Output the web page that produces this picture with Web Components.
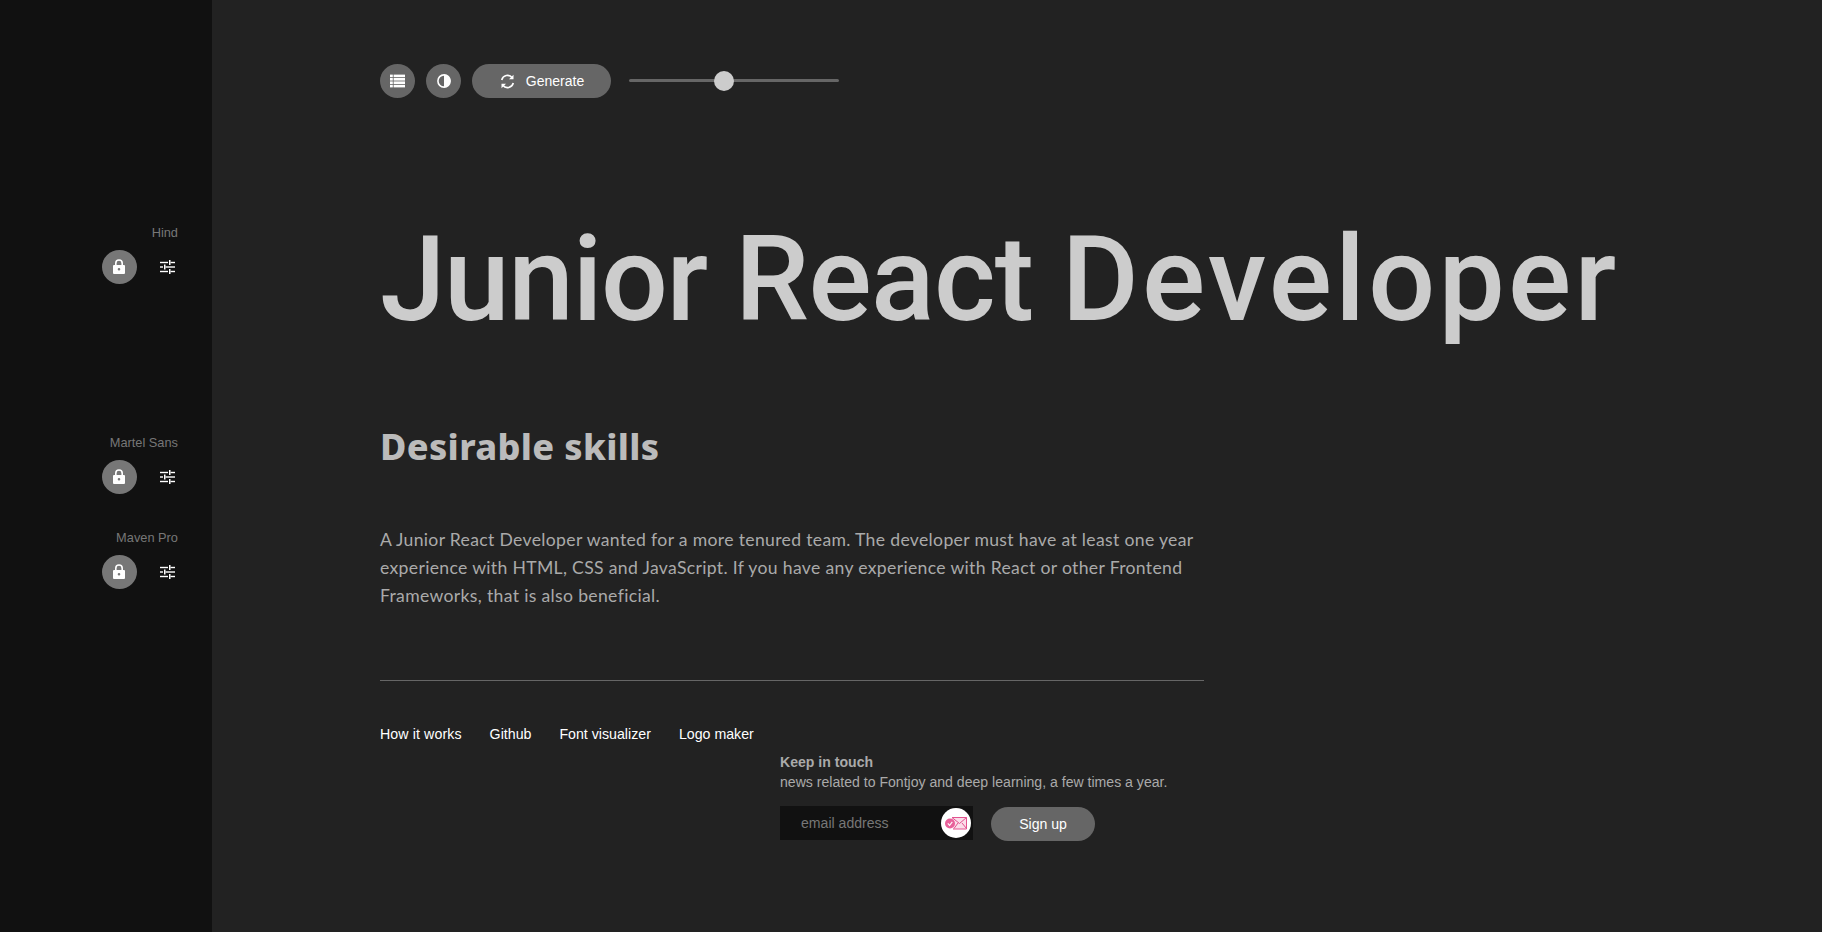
<!DOCTYPE html>
<html lang="en"><head><meta charset="utf-8"><title>Fontjoy</title>
<style>
html,body{margin:0;height:100%;background:#222;overflow:hidden}
body{display:flex;height:932px;font-family:"Liberation Sans",Arial,sans-serif}
</style></head><body>
<fj-sidebar>
  <fj-font-row style="margin-top:225px" name="Hind"></fj-font-row>
  <fj-font-row style="margin-top:151px" name="Martel Sans"></fj-font-row>
  <fj-font-row style="margin-top:36px" name="Maven Pro"></fj-font-row>
</fj-sidebar>
<fj-main>
  <fj-toolbar></fj-toolbar>
  <fj-preview></fj-preview>
  <fj-footer></fj-footer>
</fj-main>
<script>
const ICONS={
 list:'<svg width="15" height="14" viewBox="0 0 15 14" fill="#fff"><rect x="0" y="0.6" width="2.8" height="2.6"/><rect x="3.6" y="0.6" width="11.4" height="2.6"/><rect x="0" y="4" width="2.8" height="2.6"/><rect x="3.6" y="4" width="11.4" height="2.6"/><rect x="0" y="7.4" width="2.8" height="2.6"/><rect x="3.6" y="7.4" width="11.4" height="2.6"/><rect x="0" y="10.8" width="2.8" height="2.6"/><rect x="3.6" y="10.8" width="11.4" height="2.6"/></svg>',
 contrast:'<svg width="14" height="14" viewBox="0 0 14 14"><circle cx="7" cy="7" r="6.1" fill="none" stroke="#fff" stroke-width="1.6"/><path d="M7 0.5a6.5 6.5 0 0 1 0 13z" fill="#fff"/></svg>',
 sync:'<svg width="15" height="15" viewBox="0 0 14 14" fill="none" stroke="#fff" stroke-width="1.5"><path d="M1.6 5.6A5.6 5.6 0 0 1 11.4 3.4"/><path d="M12.4 8.4A5.6 5.6 0 0 1 2.6 10.6"/><path d="M12.6 0.6v4.2H8.4z" fill="#fff" stroke="none"/><path d="M1.4 13.4V9.2h4.2z" fill="#fff" stroke="none"/></svg>',
 lock:'<svg style="transform:translateX(-1px)" width="12" height="15" viewBox="0 0 12 15"><path d="M2.8 6.5V4.2a3.2 3.2 0 0 1 6.4 0v2.3" fill="none" stroke="#fff" stroke-width="1.6"/><path fill-rule="evenodd" d="M1 6h10a1 1 0 0 1 1 1v7a1 1 0 0 1-1 1H1a1 1 0 0 1-1-1V7a1 1 0 0 1 1-1zm5 3a1.3 1.3 0 1 0 0 2.6A1.3 1.3 0 0 0 6 9z" fill="#fff"/></svg>',
 tune:'<svg width="15" height="14" viewBox="0 0 15 14" fill="#fff"><rect x="0" y="1.8" width="8" height="1.4"/><rect x="9" y="0" width="1.5" height="5"/><rect x="10.5" y="1.8" width="4.5" height="1.4"/><rect x="0" y="6.3" width="3" height="1.4"/><rect x="4" y="4.5" width="1.5" height="5"/><rect x="5.5" y="6.3" width="9.5" height="1.4"/><rect x="0" y="10.8" width="8" height="1.4"/><rect x="9" y="9" width="1.5" height="5"/><rect x="10.5" y="10.8" width="4.5" height="1.4"/></svg>',
 mail:'<svg width="24" height="16" viewBox="0 0 24 16"><path d="M8 2.5h14.5v11.5H9" fill="#fbdde9" stroke="#e2528f" stroke-width="1"/><path d="M8 2.5l7.5 6 7-6M14 8l-4 5.5M18 8l4.5 5.5" fill="none" stroke="#e2528f" stroke-width="1"/><circle cx="6" cy="8.5" r="5" fill="#e8609a"/><path d="M3.8 8.3l1.8 2 2.7-3.4" fill="none" stroke="#fff" stroke-width="1.1"/></svg>'
};
function def(name,css,html){
  customElements.define(name,class extends HTMLElement{
    connectedCallback(){
      if(this.shadowRoot)return;
      const r=this.attachShadow({mode:'open'});
      r.innerHTML='<style>'+css+'</style>'+html(this);
    }
  });
}
def('fj-sidebar',':host{display:flex;flex-direction:column;flex:0 0 212px;width:212px;height:932px;background:#111;box-sizing:border-box;padding-right:34px}',()=>'<slot></slot>');
def('fj-round-button',':host{display:inline-flex;align-items:center;justify-content:center;width:35px;height:34px;border-radius:50%;background:var(--bg,#666);flex:none}',el=>ICONS[el.getAttribute('icon')]);
def('fj-font-row',`:host{display:block;text-align:right}
.n{font-size:12.8px;line-height:16px;color:#777;height:16px}
.r{display:flex;justify-content:flex-end;align-items:center;margin-top:8px;height:35px}
fj-round-button{--bg:#777}
.t{display:flex;margin-left:22px;width:16px;margin-right:3px;justify-content:center}`,
el=>`<div class="n">${el.getAttribute('name')}</div><div class="r"><fj-round-button icon="lock"></fj-round-button><span class="t">${ICONS.tune}</span></div>`);
def('fj-main',':host{display:block;flex:1;padding:64px 0 0 168px;min-width:0;color:#ccc}',()=>'<slot></slot>');
def('fj-toolbar',`:host{display:flex;align-items:center;gap:11px;height:34px}
.g{display:inline-flex;align-items:center;justify-content:center;width:139px;height:34px;border-radius:17px;background:#666;color:#fff;font-size:14px;gap:11px;padding-left:1px;box-sizing:border-box}
.s{position:relative;margin-left:7px;top:-1px;width:210px;height:3px;border-radius:2px;background:#666}
.k{position:absolute;left:85px;top:-8px;width:20px;height:20px;border-radius:50%;background:#ccc}`,
()=>`<fj-round-button icon="list"></fj-round-button><fj-round-button icon="contrast"></fj-round-button><div class="g">${ICONS.sync}<span>Generate</span></div><div class="s"><div class="k"></div></div>`);
def('fj-preview',`:host{display:block}
h1{margin:107px 0 0 0;font:500 118px/150px "Roboto",sans-serif;color:#ccc;white-space:nowrap;word-spacing:-1px}
h1 .a{letter-spacing:-1.5px}h1 .b{letter-spacing:-.7px}h1 .c{letter-spacing:3.2px}
h2{margin:67px 0 0;font:800 36px/50px "Noto Sans",sans-serif;color:#bbb;white-space:nowrap;letter-spacing:.35px}
p{margin:54px 0 0;width:824px;font:400 17.6px/28px "Lato",sans-serif;color:#aaa;letter-spacing:.33px}
hr{margin:70px 0 0;width:824px;border:0;height:1px;background:#666}`,
()=>`<h1><span class="a">Junior</span> <span class="b">React</span> <span class="c">Developer</span></h1><h2>Desirable skills</h2><p>A Junior React Developer wanted for a more tenured team. The developer must have at least one year experience with HTML, CSS and JavaScript. If you have any experience with React or other Frontend Frameworks, that is also beneficial.</p><hr>`);
def('fj-footer',`:host{display:grid;grid-template-columns:400px auto;justify-content:start;margin-top:43px;font-size:14.08px;line-height:20px}
nav{display:flex;gap:28px;color:#fff;font-size:14.2px}
nav span:first-child{letter-spacing:.1px}
.k{margin-top:28px;color:#aaa}
b{display:block;height:20px}
.form{display:flex;align-items:center;margin-top:13px}
.i{position:relative;width:193px;height:34px;background:#111;color:#777;padding-left:21px;box-sizing:border-box;line-height:34px}
.m{position:absolute;right:2px;top:2px;width:30px;height:30px;border-radius:50%;background:#fff;display:flex;align-items:center;justify-content:center}
.u{margin:2px 0 0 18px;width:104px;height:34px;border-radius:17px;background:#666;color:#fff;text-align:center;line-height:34px}`,
()=>`<nav><span>How it works</span><span>Github</span><span>Font visualizer</span><span>Logo maker</span></nav><div class="k"><b>Keep in touch</b><div>news related to Fontjoy and deep learning, a few times a year.</div><div class="form"><div class="i">email address<span class="m">${ICONS.mail}</span></div><div class="u">Sign up</div></div></div>`);
</script>
</body></html>
